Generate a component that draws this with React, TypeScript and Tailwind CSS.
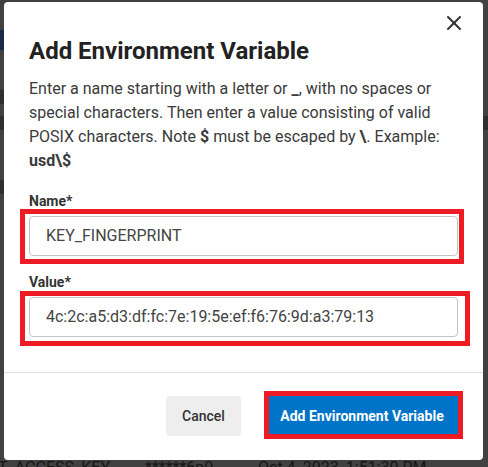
import React from 'react';
import { X } from 'lucide-react';

function Field({ label, value, className = '' }: { label: string; value: string; className?: string }) {
    return (
        <div className={className}>
            <div className="text-[14px] leading-[20px] font-bold text-[#333333] mb-[5px]">{label}</div>
            <div className="h-[40px] w-full border border-[#c4c4c4] rounded-[4px] px-4 flex items-center text-[16px] text-[#444444]">
                {value}
            </div>
        </div>
    );
}

export default function App() {
    return (
        <div
            className="relative w-[488px] h-[467px] overflow-hidden bg-[#414141]"
            style={{ fontFamily: 'Roboto, "Liberation Sans", sans-serif' }}
        >
            {/* dimmed page behind the modal */}
            <div className="flex flex-col">
                <div className="h-[30px]" />
                <div className="h-[20px] w-[10px] bg-[#1c2a4a]" />
                <div className="h-[40px]" />
                <div className="h-[14px] w-[8px] bg-[#2e2e2e]" />
                <div className="h-[12px]" />
                <div className="flex justify-between">
                    <div className="h-[14px] w-[8px] bg-[#2e2e2e]" />
                    <div className="h-[14px] w-[8px] bg-[#2e2e2e]" />
                </div>
                <div className="h-[50px]" />
                <div className="h-[14px] w-[8px] bg-[#2e2e2e]" />
            </div>
            <div className="absolute left-[-2px] top-[456px] flex text-[16px] leading-[24px] text-[#161616] whitespace-nowrap">
                <span className="w-[147px]">T_ACCESS_KEY</span>
                <span className="w-[113px]">******6n0</span>
                <span>Oct 4, 2023, 1:51:30 PM</span>
            </div>

            {/* modal */}
            <div className="absolute left-[4px] top-[2px] w-[479px] h-[458px] bg-white rounded-[4px] flex flex-col">
                <button className="absolute left-[438px] top-[9px] w-[24px] h-[24px] flex items-center justify-center text-[#333333]">
                    <X size={24} strokeWidth={2} />
                </button>

                <div className="pt-[33px] px-[25px] pb-[35px]">
                    <h2 className="text-[24px] leading-[32px] font-bold text-[#222222] mb-[10px]">
                        Add Environment Variable
                    </h2>
                    <p className="text-[16px] leading-[24px] text-[#3a3a3a]">
                        Enter a name starting with a letter or <b>_</b>, with no spaces or special characters. Then
                        enter a value consisting of valid POSIX characters. Note <b>$</b> must be escaped by <b>\</b>.
                        Example: <b>usd\$</b>
                    </p>

                    <div className="relative mt-[18px]">
                        <Field label="Name*" value="KEY_FINGERPRINT" />
                        <div className="absolute left-[-9px] right-[-6px] top-[18px] h-[55px] border-[5px] border-[#ed1c24]" />
                    </div>

                    <div className="relative mt-[16px]">
                        <Field label="Value*" value="4c:2c:a5:d3:df:fc:7e:19:5e:ef:f6:76:9d:a3:79:13" />
                        <div className="absolute left-[-9px] right-[-12px] top-[19px] h-[55px] border-[5px] border-[#ed1c24]" />
                    </div>
                </div>

                <div className="border-t border-[#e0e0e0] pt-[23px] pb-[24px] pr-[24px] flex justify-end gap-[24px]">
                    <button className="h-[40px] w-[75px] rounded-[4px] bg-[#eeeeee] text-[14px] font-medium text-[#333333]">
                        Cancel
                    </button>
                    <div className="relative">
                        <button className="h-[40px] w-[194px] bg-[#0074c8] text-[14px] font-bold text-white">
                            Add Environment Variable
                        </button>
                        <div className="absolute left-[-1px] right-[-4px] top-[-5px] bottom-[-3px] border-[5px] border-[#ed1c24]" />
                    </div>
                </div>
            </div>
        </div>
    );
}
